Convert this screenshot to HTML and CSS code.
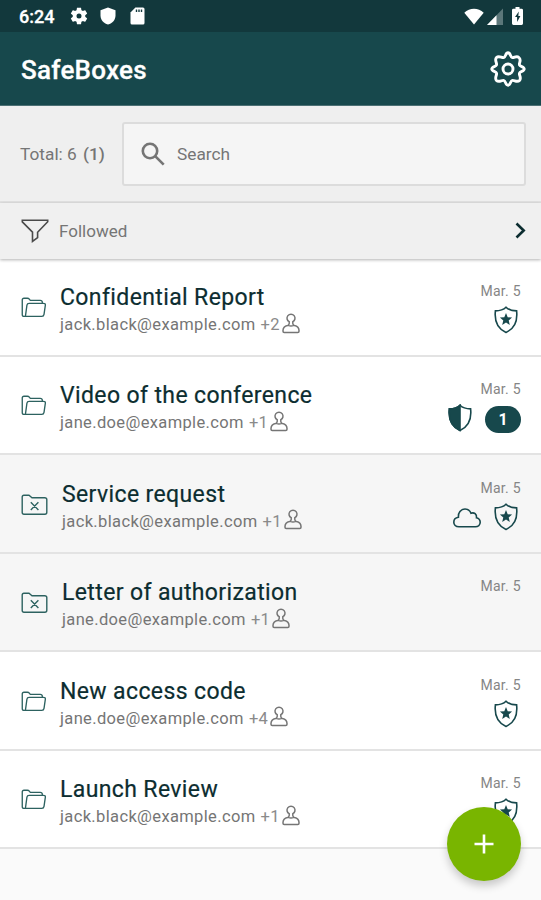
FILE: index.html
```html
<!DOCTYPE html>
<html lang="en">
<head>
<meta charset="utf-8">
<title>SafeBoxes</title>
<link rel="stylesheet" href="styles.css">
</head>
<body>
<svg class="defs" aria-hidden="true">
  <symbol id="gear" viewBox="0 0 24 24"><path d="M19.43 12.98c.04-.32.07-.64.07-.98s-.03-.66-.07-.98l2.11-1.65c.19-.15.24-.42.12-.64l-2-3.46c-.12-.22-.39-.3-.61-.22l-2.49 1c-.52-.4-1.08-.73-1.69-.98l-.38-2.65C14.46 2.18 14.25 2 14 2h-4c-.25 0-.46.18-.49.42l-.38 2.65c-.61.25-1.17.59-1.69.98l-2.49-1c-.23-.09-.49 0-.61.22l-2 3.46c-.13.22-.07.49.12.64l2.11 1.65c-.04.32-.07.65-.07.98s.03.66.07.98l-2.11 1.65c-.19.15-.24.42-.12.64l2 3.46c.12.22.39.3.61.22l2.49-1c.52.4 1.08.73 1.69.98l.38 2.65c.03.24.24.42.49.42h4c.25 0 .46-.18.49-.42l.38-2.65c.61-.25 1.17-.59 1.69-.98l2.49 1c.23.09.49 0 .61-.22l2-3.46c.12-.22.07-.49-.12-.64l-2.11-1.65zM12 15a3 3 0 1 1 0-6 3 3 0 0 1 0 6z" fill="currentColor"/></symbol>
  <symbol id="folder" viewBox="0 0 27 22"><path d="M4.5 20.3H3Q1.2 20.3 1.2 18.5V3Q1.2 1.3 3 1.3H6.6Q7.8 1.3 8.6 2.3L9.6 3.5H20Q22.2 3.5 22.2 5.5V6.6M4.5 20.3L6.1 8.6Q6.4 6.6 8.4 6.6H23.4Q25.6 6.6 25.4 8.6L24 18.2Q23.7 20.3 21.7 20.3H4.5"/></symbol>
  <symbol id="folder-x" viewBox="0 0 27 22"><path d="M1.2 3Q1.2 1.3 2.9 1.3H8L11 3.7H23.7Q25.8 3.7 25.8 5.5V18.3Q25.8 20.2 23.9 20.2H3Q1.2 20.2 1.2 18.4ZM9.8 8.3L17.4 15.9M17.4 8.3L9.8 15.9"/></symbol>
  <symbol id="person" viewBox="0 0 18 21"><path d="M7.2 8.7A4 4 0 1 1 10.8 8.7V10.6Q10.8 12 12.4 12.4C15.5 13.1 17 15 17 17.6V18.2Q17 19.4 15.8 19.4H2.2Q1 19.4 1 18.2V17.6C1 15 2.5 13.1 5.6 12.4Q7.2 12 7.2 10.6ZM6.4 12.3Q9 13.6 11.6 12.3"/></symbol>
  <symbol id="shield" viewBox="0 0 24 28"><path d="M12 1.2C9.5 3.7 5.8 4.8 1.4 4.9C.3 15 2.7 22.4 12 26.4C21.3 22.4 23.7 15 22.6 4.9C18.2 4.8 14.5 3.7 12 1.2Z"/></symbol>
  <symbol id="star" viewBox="0 0 24 28"><path d="M12 7.1L13.7 11.3L18.1 11.6L14.7 14.5L15.8 18.9L12 16.5L8.2 18.9L9.3 14.5L5.9 11.6L10.3 11.3Z" fill="currentColor" stroke="none"/></symbol>
  <symbol id="half" viewBox="0 0 24 28"><path d="M12 1.2C9.5 3.7 5.8 4.8 1.4 4.9C.3 15 2.7 22.4 12 26.4Z" fill="currentColor"/></symbol>
  <symbol id="cloud" viewBox="0 0 28 20"><path d="M6 18.8C2.6 18.8.8 16.8.8 14.2C.8 11.5 2.7 9.6 5.4 9.2C4.7 4.8 8 1 12 1C15 1 17 2.7 18 5.2C21.2 4 24 6.3 23.5 9.8C25.8 10.4 27.2 12.1 27.2 14.3C27.2 17 25 18.8 22.4 18.8Z"/></symbol>
</svg>

<div class="status">
  <span class="clock">6:24</span>
  <svg class="st-gear"><use href="#gear"/></svg>
  <svg class="st-shield" viewBox="0 0 16 18"><path d="M8 .5L15.5 3.3V8.4C15.5 12.8 12.5 16.2 8 17.5C3.5 16.2.5 12.8.5 8.4V3.3Z" fill="#fff"/></svg>
  <svg class="st-card" viewBox="0 0 15 18"><path d="M5.4.5H13Q14.5.5 14.5 2V16Q14.5 17.5 13 17.5H2Q.5 17.5.5 16V5.5Z" fill="#fff"/><path d="M6.5 2.5V5M9 2.5V5M11.5 2.5V5" stroke="#12383c" stroke-width="1.4"/></svg>
  <svg class="st-wifi" viewBox="0 0 21 17"><path d="M.3 4.6C6-.9 15-.9 20.7 4.6L10.5 16.8Z" fill="#fff"/></svg>
  <svg class="st-signal" viewBox="0 0 16 17"><path d="M16 .5V17H0Z" fill="#5c777a"/><path d="M9.5 7.2V17H0Z" fill="#fff"/></svg>
  <svg class="st-battery" viewBox="0 0 11 18"><path d="M3.5 0H7.5V1.8H9.6Q11 1.8 11 3.2V16.6Q11 18 9.6 18H1.4Q0 18 0 16.6V3.2Q0 1.8 1.4 1.8H3.5Z" fill="#fff"/><path d="M6.8 4.5L3 10H5.1V15L8.4 9H6.3Z" fill="#12383c"/></svg>
</div>

<header class="appbar">
  <h1>SafeBoxes</h1>
  <svg class="settings" viewBox="0 0 36 36"><path d="M18 1.8C20.5 1.8 20.2 5.8 22.1 6.5C24 7.3 26.3 4.1 28.9 6.5C31.9 9.1 28.7 12 29.5 13.9C30.2 15.8 34.2 15.5 34.2 18C34.2 20.5 30.2 20.2 29.5 22.1C28.7 24 31.9 26.9 29.5 29.5C26.9 31.9 24 28.7 22.1 29.5C20.2 30.2 20.5 34.2 18 34.2C15.5 34.2 15.8 30.2 13.9 29.5C12 28.7 9.1 31.9 6.5 29.5C4.1 26.9 7.3 24 6.5 22.1C5.8 20.2 1.8 20.5 1.8 18C1.8 15.5 5.8 15.8 6.5 13.9C7.3 12 4.1 9.1 6.5 6.5C9.1 4.1 12 7.3 13.9 6.5C15.8 5.8 15.5 1.8 18 1.8Z"/><circle cx="18" cy="18" r="5"/></svg>
</header>

<section class="search-row">
  <div class="total">Total: 6 <b>(1)</b></div>
  <div class="search">
    <svg viewBox="0 0 24 24"><circle cx="9" cy="9" r="7.2"/><path d="M14.2 14.2L22.7 22.7"/></svg>
    <span>Search</span>
  </div>
</section>

<section class="filter">
  <svg class="funnel" viewBox="0 0 28 24"><path d="M1.3 1.2H26.7V2.8L16.6 13.2V18.7L11.5 22.4V13.2L1.3 2.8Z"/></svg>
  <span>Followed</span>
  <svg class="chevron" viewBox="0 0 11 17"><path d="M1.5 1.5L8.7 8.5L1.5 15.5"/></svg>
</section>

<main class="list">
  <article class="row">
    <svg class="folder"><use href="#folder"/></svg>
    <div class="info"><h2>Confidential Report</h2><p><span class="mail">jack.black@example.com</span><span class="more">+2</span><svg class="person"><use href="#person"/></svg></p></div>
    <div class="meta"><time>Mar. 5</time><div class="badges"><svg class="shield"><use href="#shield"/><use href="#star"/></svg></div></div>
  </article>
  <article class="row">
    <svg class="folder"><use href="#folder"/></svg>
    <div class="info"><h2>Video of the conference</h2><p><span class="mail">jane.doe@example.com</span><span class="more">+1</span><svg class="person"><use href="#person"/></svg></p></div>
    <div class="meta"><time>Mar. 5</time><div class="badges with-count"><svg class="shield"><use href="#shield"/><use href="#half"/></svg><span class="count">1</span></div></div>
  </article>
  <article class="row closed">
    <svg class="folder"><use href="#folder-x"/></svg>
    <div class="info"><h2>Service request</h2><p><span class="mail">jack.black@example.com</span><span class="more">+1</span><svg class="person"><use href="#person"/></svg></p></div>
    <div class="meta"><time>Mar. 5</time><div class="badges"><svg class="cloud"><use href="#cloud"/></svg><svg class="shield"><use href="#shield"/><use href="#star"/></svg></div></div>
  </article>
  <article class="row closed">
    <svg class="folder"><use href="#folder-x"/></svg>
    <div class="info"><h2>Letter of authorization</h2><p><span class="mail">jane.doe@example.com</span><span class="more">+1</span><svg class="person"><use href="#person"/></svg></p></div>
    <div class="meta"><time>Mar. 5</time></div>
  </article>
  <article class="row">
    <svg class="folder"><use href="#folder"/></svg>
    <div class="info"><h2>New access code</h2><p><span class="mail">jane.doe@example.com</span><span class="more">+4</span><svg class="person"><use href="#person"/></svg></p></div>
    <div class="meta"><time>Mar. 5</time><div class="badges"><svg class="shield"><use href="#shield"/><use href="#star"/></svg></div></div>
  </article>
  <article class="row">
    <svg class="folder"><use href="#folder"/></svg>
    <div class="info"><h2>Launch Review</h2><p><span class="mail">jack.black@example.com</span><span class="more">+1</span><svg class="person"><use href="#person"/></svg></p></div>
    <div class="meta"><time>Mar. 5</time><div class="badges"><svg class="shield"><use href="#shield"/><use href="#star"/></svg></div></div>
  </article>
</main>

<button class="fab" aria-label="Add"><svg viewBox="0 0 20 20"><path d="M10 .5V19.5M.5 10H19.5"/></svg></button>
</body>
</html>
```
FILE: styles.css
```css
* { box-sizing: border-box; }
body {
  margin: 0;
  height: 900px;
  overflow: hidden;
  background: #fafafa;
  font-family: Roboto, "Liberation Sans", sans-serif;
  color: #757575;
}
h1, h2, p { margin: 0; }
svg { display: block; flex: none; fill: none; stroke: currentColor; }
.defs { position: absolute; width: 0; height: 0; }

.status {
  display: flex;
  align-items: center;
  height: 32px;
  padding: 0 18px 0 19px;
  background: #12383c;
  color: #fff;
}
.status svg { stroke: none; }
.clock { width: 50px; font-size: 18px; font-weight: 500; line-height: 32px; padding-top: 2px; -webkit-text-stroke: .3px; }
.st-gear { width: 20px; height: 20px; margin-right: 11px; }
.st-shield { width: 16px; height: 18px; margin-right: 14px; }
.st-card { width: 15px; height: 18px; }
.st-wifi { width: 20px; height: 17px; margin-left: auto; margin-right: 3px; }
.st-signal { width: 16px; height: 17px; margin-right: 9px; }
.st-battery { width: 11px; height: 18px; }

.appbar {
  display: flex;
  align-items: center;
  justify-content: space-between;
  height: 74px;
  padding: 0 15px 0 21px;
  background: #17484c;
  border-bottom: 1px solid #4c7074;
  color: #fff;
}
h1 { font-size: 26px; font-weight: 500; line-height: 32px; padding-top: 3px; letter-spacing: .25px; -webkit-text-stroke: .3px; }
.settings { width: 36px; height: 36px; stroke-width: 2.9; }

.search-row {
  display: flex;
  align-items: center;
  height: 97px;
  padding: 0 15px 0 20px;
  background: #efefef;
  border-bottom: 2px solid #e2e2e2;
  font-size: 17.3px;
}
.total { width: 101.5px; padding-top: 1px; white-space: nowrap; }
.total b { font-weight: 500; margin-left: 2px; }
.search {
  display: flex;
  align-items: center;
  flex: 1;
  height: 64px;
  padding-left: 17.5px;
  background: #f5f5f5;
  border: 2px solid #dcdcdc;
  border-radius: 3px;
}
.search svg { width: 24px; height: 24px; margin-right: 12px; stroke-width: 2.6; }
.search span { padding-top: 1px; }

.filter {
  position: relative;
  display: flex;
  align-items: center;
  height: 55.5px;
  padding: 0 15px 0 21px;
  background: #f0f0f0;
  font-size: 17px;
  box-shadow: 0 1px 3px rgba(0, 0, 0, .3);
}
.funnel { width: 28px; height: 24px; margin-right: 10px; color: #4a4a4a; stroke-width: 1.6; }
.filter span { padding-top: 1px; }
.chevron { width: 11px; height: 17px; margin-left: auto; color: #0c2d30; stroke-width: 2.6; }

.row {
  display: flex;
  height: 98.42px;
  padding: 0 20px 0 21px;
  background: #fff;
  border-bottom: 2px solid #e3e3e3;
}
.folder { width: 26px; height: 21px; margin: 38.5px 13px 0 0; color: #2d6260; stroke-width: 1.4; }
.info { padding-top: 25.5px; }
h2 { font-size: 23px; font-weight: 400; line-height: 28px; letter-spacing: .38px; color: #0c2d30; white-space: nowrap; -webkit-text-stroke: .2px; }
.info p { display: flex; font-size: 16.5px; line-height: 25px; letter-spacing: .36px; white-space: nowrap; }
.more { margin-left: 5px; color: #8a8a8a; }
.person { width: 18px; height: 21px; margin: .5px 0 0 2px; stroke-width: 1.5; }
.meta { margin-left: auto; padding-top: 23.4px; text-align: right; }
time { display: block; font-size: 14px; line-height: 18px; letter-spacing: .3px; color: #858585; }
.badges { display: flex; align-items: center; justify-content: flex-end; height: 28px; margin: 6px 3px 0 0; color: #17484c; }
.shield { width: 24px; height: 28px; stroke-width: 1.6; }
.cloud { width: 28px; height: 20px; margin: 2px 13px 0 0; stroke-width: 1.6; }
.with-count { margin-right: 0; }
.count { width: 36px; height: 27px; margin: 2px 0 0 13px; border-radius: 14px; background: #17484c; color: #fff; font-size: 16px; font-weight: 700; line-height: 27px; text-align: center; }

.closed { background: #f6f6f6; }
.closed .folder { width: 27px; height: 22px; margin-right: 12px; }
.closed .info { padding-left: 2px; }

.fab {
  position: absolute;
  left: 447px;
  top: 806.5px;
  display: flex;
  align-items: center;
  justify-content: center;
  width: 74px;
  height: 74px;
  padding: 0;
  border: 0;
  border-radius: 50%;
  background: #79b500;
  color: #fff;
  box-shadow: 0 5px 9px rgba(0, 0, 0, .2);
}
.fab svg { width: 20px; height: 20px; stroke-width: 2.6; }
```
